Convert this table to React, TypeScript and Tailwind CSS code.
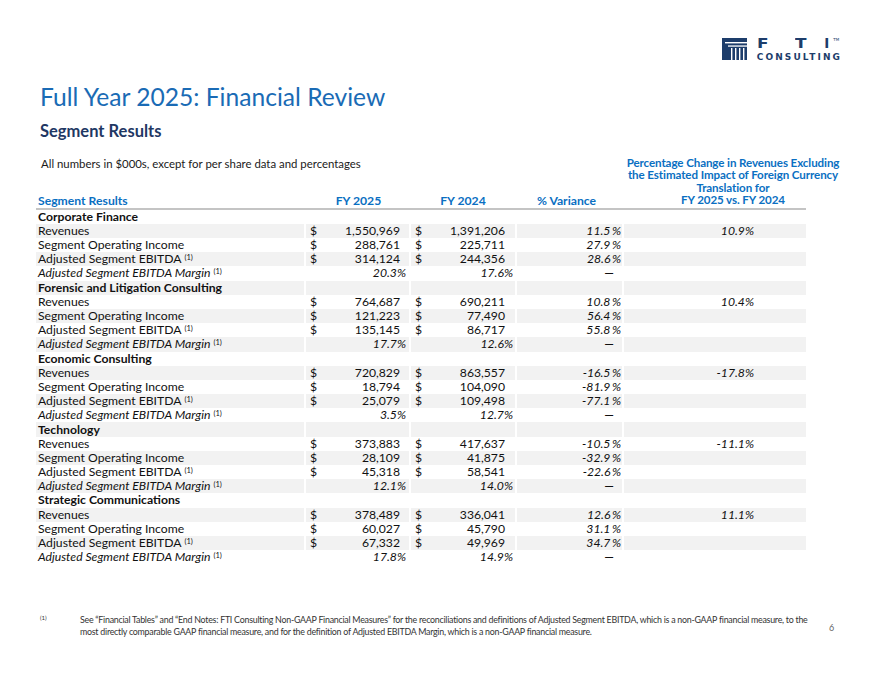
import React from "react";

type Seg = {
  name: string;
  rev: string[];
  soi: string[];
  adj: string[];
  margin: string[];
};

const segs: Seg[] = [
  {
    name: "Corporate Finance",
    rev: ["1,550,969", "1,391,206", "11.5%", "10.9%"],
    soi: ["288,761", "225,711", "27.9%"],
    adj: ["314,124", "244,356", "28.6%"],
    margin: ["20.3%", "17.6%"],
  },
  {
    name: "Forensic and Litigation Consulting",
    rev: ["764,687", "690,211", "10.8%", "10.4%"],
    soi: ["121,223", "77,490", "56.4%"],
    adj: ["135,145", "86,717", "55.8%"],
    margin: ["17.7%", "12.6%"],
  },
  {
    name: "Economic Consulting",
    rev: ["720,829", "863,557", "-16.5%", "-17.8%"],
    soi: ["18,794", "104,090", "-81.9%"],
    adj: ["25,079", "109,498", "-77.1%"],
    margin: ["3.5%", "12.7%"],
  },
  {
    name: "Technology",
    rev: ["373,883", "417,637", "-10.5%", "-11.1%"],
    soi: ["28,109", "41,875", "-32.9%"],
    adj: ["45,318", "58,541", "-22.6%"],
    margin: ["12.1%", "14.0%"],
  },
  {
    name: "Strategic Communications",
    rev: ["378,489", "336,041", "12.6%", "11.1%"],
    soi: ["60,027", "45,790", "31.1%"],
    adj: ["67,332", "49,969", "34.7%"],
    margin: ["17.8%", "14.9%"],
  },
];

type Row = {
  kind: "head" | "money" | "margin";
  label: string;
  sup?: boolean;
  vals?: string[];
};

function buildRows(): Row[] {
  const rows: Row[] = [];
  segs.forEach((s) => {
    rows.push({ kind: "head", label: s.name });
    rows.push({ kind: "money", label: "Revenues", vals: s.rev });
    rows.push({ kind: "money", label: "Segment Operating Income", vals: s.soi });
    rows.push({ kind: "money", label: "Adjusted Segment EBITDA", sup: true, vals: s.adj });
    rows.push({ kind: "margin", label: "Adjusted Segment EBITDA Margin", sup: true, vals: s.margin });
  });
  return rows;
}

function Pct({ v }: { v: string }) {
  const num = v.replace("%", "");
  return (
    <span className="whitespace-nowrap">
      {num}
      <span className="ml-[1.5px]">%</span>
    </span>
  );
}

function Logo() {
  return (
    <div className="flex items-start">
      <svg width="25" height="22" viewBox="0 0 25 22" className="mt-[1px]">
        <rect x="0" y="0" width="25" height="22" fill="#1d3d6b" />
        <rect x="3" y="4" width="22" height="1.4" fill="#ffffff" />
        <rect x="6" y="7.4" width="19" height="1.3" fill="#ffffff" />
        <rect x="9" y="10" width="1.4" height="12" fill="#ffffff" />
        <rect x="13" y="10" width="1.4" height="12" fill="#ffffff" />
        <rect x="17" y="10" width="1.4" height="12" fill="#ffffff" />
        <rect x="21" y="10" width="1.4" height="12" fill="#ffffff" />
      </svg>
      <div className="ml-[10px] flex flex-col">
        <div className="flex items-start text-[#1d3d6b] font-bold text-[13.5px] leading-[12px] font-['DejaVu_Sans',sans-serif]">
          <span className="scale-x-[1.25] origin-left">F</span>
          <span className="ml-[29px] scale-x-[1.25] origin-left">T</span>
          <span className="ml-[20px]">I</span>
          <span className="ml-[4px] text-[4px] leading-[5px] font-normal">TM</span>
        </div>
        <div className="mt-[4px] text-[#1d3d6b] text-[9px] leading-[9px] tracking-[2.1px] font-semibold font-['DejaVu_Sans',sans-serif]">
          CONSULTING
        </div>
      </div>
    </div>
  );
}

const COLS = "grid grid-cols-[268px_103px_104px_105px_182px] gap-x-[2px]";

export default function App() {
  const rows = buildRows();
  const cell = "h-[14.2px] flex items-center";
  return (
    <div className="w-[880px] h-[680px] bg-white relative font-['Lato',sans-serif] text-[#111]">
      <div className="flex justify-end pt-[37px] pr-[38px]">
        <Logo />
      </div>

      <div className="pl-[40px] mt-[20px]">
        <div className="text-[24.6px] leading-[30px] text-[#1a6bb5] font-normal">
          Full Year 2025: Financial Review
        </div>
        <div className="mt-[9px] text-[16.5px] leading-[20px] font-bold text-[#1f3864]">
          Segment Results
        </div>
      </div>

      <div className="pl-[36px] mt-[16px] w-[806px]">
        {/* header row */}
        <div className={`${COLS} items-end font-bold text-[12.2px] border-b-2 border-[#c4c4c4] pb-[1px]`}>
          <div className="self-stretch flex flex-col justify-between">
            <div className="pl-[5px] whitespace-nowrap text-[11.4px] leading-[14px] font-normal text-[#1a1a1a]">
              All numbers in $000s, except for per share data and percentages
            </div>
            <div className="pl-[2px] leading-[13px] text-[#0a6fc2]">Segment Results</div>
          </div>
          <div className="text-center pl-[2px] leading-[13px] text-[#0a6fc2]">FY 2025</div>
          <div className="text-center leading-[13px] text-[#0a6fc2]">FY 2024</div>
          <div className="text-center pr-[6px] leading-[13px] text-[#0a6fc2]">% Variance</div>
          <div className="text-[#0a6fc2]">
            <div className="w-[218px] whitespace-nowrap text-center leading-[12.4px] text-[11.6px] tracking-[-0.1px]">
              Percentage Change in Revenues Excluding
              <br />
              the Estimated Impact of Foreign Currency
              <br />
              Translation for
              <br />
              FY 2025 vs. FY 2024
            </div>
          </div>
        </div>

        {/* body */}
        <div className="flex flex-col text-[12.2px] leading-[14px]">
          {rows.map((r, i) => {
            const bg = i % 2 === 1 ? "bg-[#f2f2f2]" : "bg-white";
            return (
              <div key={i} className={COLS}>
                <div
                  className={`${cell} ${bg} pl-[2px] whitespace-nowrap ${
                    r.kind === "head" ? "font-bold" : ""
                  } ${r.kind === "margin" ? "italic" : ""}`}
                >
                  {r.label}
                  {r.sup && (
                    <sup className="text-[7.5px] not-italic ml-[3px] relative -top-[1px]">
                      (1)
                    </sup>
                  )}
                </div>
                {r.kind === "head" && (
                  <>
                    <div className={`${cell} ${bg}`} />
                    <div className={`${cell} ${bg}`} />
                    <div className={`${cell} ${bg}`} />
                    <div className={`${cell} ${bg}`} />
                  </>
                )}
                {r.kind === "money" && r.vals && (
                  <>
                    <div className={`${cell} ${bg} justify-between pl-[4px] pr-[9px]`}>
                      <span>$</span>
                      <span>{r.vals[0]}</span>
                    </div>
                    <div className={`${cell} ${bg} justify-between pl-[4px] pr-[10px]`}>
                      <span>$</span>
                      <span>{r.vals[1]}</span>
                    </div>
                    <div className={`${cell} ${bg} justify-end pr-[1px] italic`}>
                      <Pct v={r.vals[2]} />
                    </div>
                    <div className={`${cell} ${bg} justify-end pr-[52px] italic`}>
                      {r.vals[3] ?? ""}
                    </div>
                  </>
                )}
                {r.kind === "margin" && r.vals && (
                  <>
                    <div className={`${cell} ${bg} justify-end pr-[3px] italic`}>
                      {r.vals[0]}
                    </div>
                    <div className={`${cell} ${bg} justify-end pr-[2px] italic`}>
                      {r.vals[1]}
                    </div>
                    <div className={`${cell} ${bg} justify-end pr-[8px]`}>—</div>
                    <div className={`${cell} ${bg}`} />
                  </>
                )}
              </div>
            );
          })}
        </div>
      </div>

      {/* footnote */}
      <div className="absolute left-[40px] top-[614px] flex text-[#333] text-[8.85px] leading-[12px] w-[800px]">
        <div className="w-[40px] text-[6px] leading-[8px]">(1)</div>
        <div className="whitespace-nowrap tracking-[-0.25px]">
          See “Financial Tables” and “End Notes: FTI Consulting Non-GAAP Financial Measures” for the reconciliations and definitions of Adjusted Segment EBITDA, which is a non-GAAP financial measure, to the
          <br />
          most directly comparable GAAP financial measure, and for the definition of Adjusted EBITDA Margin, which is a non-GAAP financial measure.
        </div>
      </div>
      <div className="absolute left-[829px] top-[621px] text-[9px] text-[#666]">6</div>
    </div>
  );
}
